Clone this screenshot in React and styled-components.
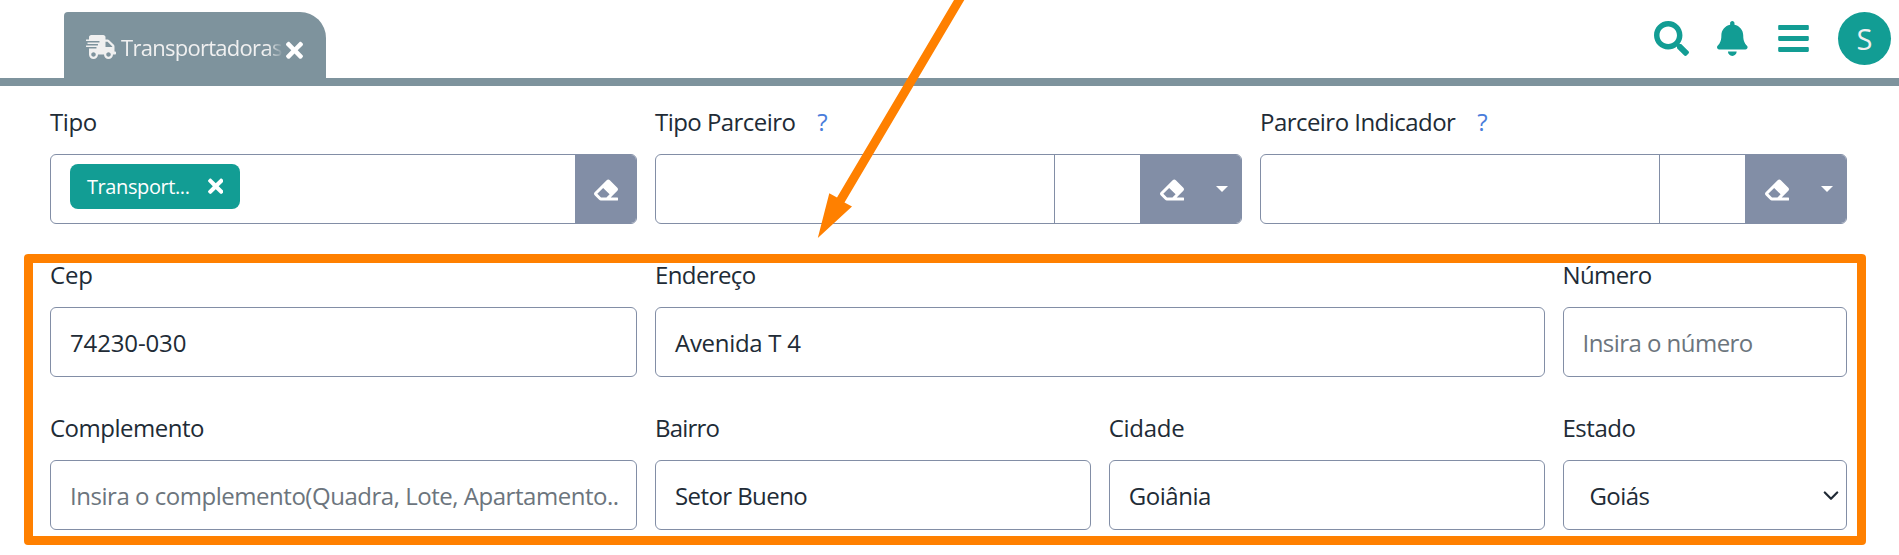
import React from 'react';
import styled, { createGlobalStyle } from 'styled-components';
import {
  FaShippingFast,
  FaTimes,
  FaSearch,
  FaBell,
  FaBars,
  FaEraser,
} from 'react-icons/fa';

const color = {
  teal: '#129d94',
  slate: '#7e939d',
  border: '#828ea6',
  ink: '#212b36',
  muted: '#6c757d',
  help: '#4a7ddb',
  highlight: '#ff8000',
};

const GlobalStyle = createGlobalStyle`
  *, *::before, *::after { box-sizing: border-box; }
  body {
    margin: 0;
    overflow: hidden;
    background: #fff;
    color: ${color.ink};
    font-family: "Open Sans", "Segoe UI", sans-serif;
    font-size: 24px;
  }
`;

const Page = styled.div`
  position: relative;
  width: 100%;
  height: 555px;
  overflow: hidden;
`;

const Header = styled.header`
  display: flex;
  justify-content: space-between;
  height: 86px;
  padding: 12px 8px 0 64px;
  border-bottom: 8px solid ${color.slate};
`;

const Tab = styled.div`
  display: flex;
  align-items: center;
  width: 262px;
  height: 66px;
  padding: 4px 23px 0 22px;
  border-radius: 4px 26px 0 0;
  background: ${color.slate};
  color: #f0f0f0;

  svg { flex: none; }
`;

const TabTitle = styled.span`
  flex: 1;
  margin-left: 5px;
  overflow: hidden;
  white-space: nowrap;
  font-size: 22px;
  line-height: 34px;
  letter-spacing: -0.72px;
  mask-image: linear-gradient(to right, #000 calc(100% - 15px), transparent);
`;

const TabClose = styled(FaTimes)`
  width: 17px;
  height: 24.7px;
  margin: 7px 0 0 3px;
  color: #fff;
`;

const Actions = styled.nav`
  display: flex;
  align-items: center;
  height: 53px;
  color: ${color.teal};
`;

const SearchIcon = styled(FaSearch)`
  width: 35px;
  height: 35px;
  margin-right: 28px;
`;

const BellIcon = styled(FaBell)`
  width: 30.6px;
  height: 35px;
  margin-right: 30px;
`;

const MenuIcon = styled(FaBars)`
  width: 31px;
  height: 35px;
  margin-right: 29px;
`;

const Avatar = styled.div`
  width: 53px;
  height: 53px;
  border-radius: 50%;
  background: ${color.teal};
  color: #f0f0f0;
  font-size: 29px;
  line-height: 53px;
  text-align: center;
`;

const Form = styled.form`
  display: grid;
  grid-template-columns: repeat(12, minmax(0, 1fr));
  column-gap: 18px;
  row-gap: 33px;
  padding: 18px 52px 0 50px;
`;

const FieldCell = styled.div`
  grid-column: span ${(p) => p.$span};
`;

const Label = styled.label`
  display: flex;
  gap: 22px;
  height: 36px;
  margin-bottom: 14px;
  line-height: 36px;
  white-space: nowrap;
`;

const Text = styled.span`
  letter-spacing: ${(p) => p.$track || 0}px;
`;

const Help = styled.span`
  color: ${color.help};
`;

const Control = styled.div`
  display: flex;
  height: 70px;
  border: 1px solid ${color.border};
  border-radius: 6px;
  overflow: hidden;
  background: #fff;
`;

const Value = styled.div`
  flex: 1;
  min-width: 0;
  padding: 1px 0 0 ${(p) => p.$indent || 19}px;
  overflow: hidden;
  white-space: nowrap;
  line-height: 68px;
  color: ${(p) => (p.$placeholder ? color.muted : color.ink)};
`;

const ChipArea = styled.div`
  flex: 1;
  padding: 9px 0 0 19px;
`;

const Chip = styled.div`
  display: flex;
  align-items: center;
  justify-content: space-between;
  width: 170px;
  height: 45px;
  padding: 0 17px;
  border-radius: 8px;
  background: ${color.teal};
  color: #fff;
  font-size: 20px;
  line-height: 29px;

  svg { width: 15.5px; height: 22.5px; }
`;

const LookupCode = styled.div`
  flex: 1;
`;

const LookupName = styled.div`
  width: 86px;
  border-left: 1px solid ${color.border};
`;

const ClearButton = styled.div`
  display: flex;
  align-items: center;
  width: ${(p) => (p.$menu ? 101 : 61)}px;
  padding: 1px 0 0 ${(p) => (p.$menu ? 20 : 19)}px;
  background: ${color.border};
  color: #fff;

  svg { width: 24px; height: 24px; }
`;

const Caret = styled.span`
  margin: -2px 0 0 32px;
  border: 6px solid transparent;
  border-top-color: #fff;
  border-bottom: 0;
`;

const SelectArrow = styled.svg`
  align-self: center;
  width: 16px;
  height: 10px;
  margin: 2px 7px 0 0;
  fill: none;
  stroke: ${color.ink};
  stroke-width: 2.2;
  stroke-linecap: round;
  stroke-linejoin: round;
`;

const Highlight = styled.div`
  position: absolute;
  left: 24px;
  top: 254px;
  width: 1842px;
  height: 291px;
  border-radius: 4px;
  border: 9px solid ${color.highlight};
  pointer-events: none;
`;

const Arrow = styled.svg`
  position: absolute;
  left: 810px;
  top: 0;
  width: 170px;
  height: 240px;
  fill: ${color.highlight};
  pointer-events: none;
`;

function Field({ span, label, track, help, children }) {
  return (
    <FieldCell $span={span}>
      <Label>
        <Text $track={track}>{label}</Text>
        {help && <Help>?</Help>}
      </Label>
      <Control>{children}</Control>
    </FieldCell>
  );
}

function TextField({ value, placeholder, valueTrack, ...field }) {
  return (
    <Field {...field}>
      <Value $placeholder={!value}>
        <Text $track={valueTrack}>{value || placeholder}</Text>
      </Value>
    </Field>
  );
}

function LookupField(props) {
  return (
    <Field span={4} help {...props}>
      <LookupCode />
      <LookupName />
      <ClearButton $menu>
        <FaEraser />
        <Caret />
      </ClearButton>
    </Field>
  );
}

export default function App() {
  return (
    <Page>
      <GlobalStyle />
      <Header>
        <Tab>
          <FaShippingFast size={30} />
          <TabTitle>Transportadoras</TabTitle>
          <TabClose />
        </Tab>
        <Actions>
          <SearchIcon />
          <BellIcon />
          <MenuIcon />
          <Avatar>S</Avatar>
        </Actions>
      </Header>

      <Form>
        <Field span={4} label="Tipo" track={-0.42}>
          <ChipArea>
            <Chip>
              <Text $track={-0.41}>Transport...</Text>
              <FaTimes />
            </Chip>
          </ChipArea>
          <ClearButton>
            <FaEraser />
          </ClearButton>
        </Field>
        <LookupField label="Tipo Parceiro" track={-0.55} />
        <LookupField label="Parceiro Indicador" track={-0.54} />

        <TextField span={4} label="Cep" track={-0.2} value="74230-030" valueTrack={-0.14} />
        <TextField span={6} label="Endereço" track={-0.61} value="Avenida T 4" valueTrack={-0.3} />
        <TextField span={2} label="Número" track={-0.6} placeholder="Insira o número" valueTrack={-0.54} />

        <TextField
          span={4}
          label="Complemento"
          track={-0.5}
          placeholder="Insira o complemento(Quadra, Lote, Apartamento.."
          valueTrack={-0.47}
        />
        <TextField span={3} label="Bairro" track={-0.8} value="Setor Bueno" valueTrack={-0.58} />
        <TextField span={3} label="Cidade" track={-0.28} value="Goiânia" valueTrack={-0.46} />
        <Field span={2} label="Estado" track={-0.47}>
          <Value $indent={26}>
            <Text $track={-0.6}>Goiás</Text>
          </Value>
          <SelectArrow viewBox="0 0 16 10">
            <path d="M1.8 1.5 8 7.8 14.2 1.5" />
          </SelectArrow>
        </Field>
      </Form>

      <Highlight />
      <Arrow viewBox="810 0 170 240">
        <path d="M954 0H964.3L844.5 202.5L852 206.5L817.8 238L829.3 193.3L837 197.5Z" />
      </Arrow>
    </Page>
  );
}
